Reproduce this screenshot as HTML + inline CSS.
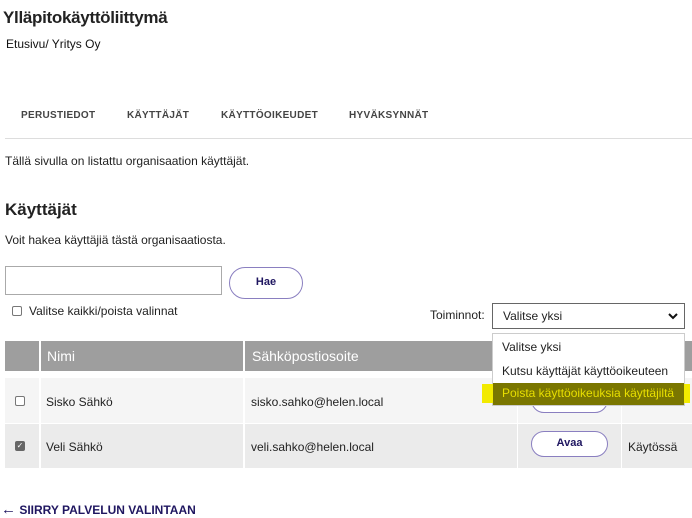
<!DOCTYPE html>
<html><head><meta charset="utf-8"><style>
*{box-sizing:border-box;margin:0;padding:0}
body{width:692px;height:510px;overflow:hidden;background:#fff;font-family:"Liberation Sans",Arial,sans-serif;color:#222;position:relative}
.a{position:absolute;white-space:nowrap}
h1{position:absolute;left:3px;top:8px;font-size:17px;font-weight:bold;color:#222;letter-spacing:-0.3px}
.tab{position:absolute;top:110px;font-size:10px;font-weight:bold;color:#444;letter-spacing:.3px}
</style></head><body>
<h1>Ylläpitokäyttöliittymä</h1>
<div class="a" style="left:6px;top:37px;font-size:12px;color:#111">Etusivu/ Yritys Oy</div>
<div class="tab" style="left:21px">PERUSTIEDOT</div>
<div class="tab" style="left:127px">KÄYTTÄJÄT</div>
<div class="tab" style="left:221px">KÄYTTÖOIKEUDET</div>
<div class="tab" style="left:349px">HYVÄKSYNNÄT</div>
<div class="a" style="left:5px;top:138px;width:687px;height:1px;background:#ddd"></div>
<div class="a" style="left:5px;top:154px;font-size:12px">Tällä sivulla on listattu organisaation käyttäjät.</div>
<div class="a" style="left:5px;top:200px;font-size:17px;font-weight:bold">Käyttäjät</div>
<div class="a" style="left:5px;top:233px;font-size:12px">Voit hakea käyttäjiä tästä organisaatiosta.</div>
<div class="a" style="left:5px;top:266px;width:217px;height:29px;border:1px solid #aaa"></div>
<div class="a" style="left:229px;top:267px;width:74px;height:32px;border:1.5px solid #8a7fc0;border-radius:16px;text-align:center;line-height:29px;font-size:11px;font-weight:bold;color:#1f1660">Hae</div>
<div class="a" style="left:12px;top:306px;width:10px;height:10px;border:1px solid #777;border-radius:2px"></div>
<div class="a" style="left:29px;top:304px;font-size:12px">Valitse kaikki/poista valinnat</div>
<div class="a" style="left:430px;top:308px;font-size:12px">Toiminnot:</div>
<div class="a" style="left:492px;top:303px;width:193px;height:26px;border:1px solid #666;font-size:12px;padding-left:10px;line-height:24px">Valitse yksi<svg style="position:absolute;right:6px;top:9px" width="10" height="7" viewBox="0 0 10 7"><path d="M1 1l4 4 4-4" stroke="#111" stroke-width="2" fill="none"/></svg></div>
<div class="a" style="left:5px;top:341px;width:687px;height:30px;background:#9e9e9e"></div>
<div class="a" style="left:39px;top:341px;width:2px;height:127px;background:#fff"></div>
<div class="a" style="left:243px;top:341px;width:2px;height:127px;background:#fff"></div>
<div class="a" style="left:47px;top:348px;font-size:14px;color:#fff">Nimi</div>
<div class="a" style="left:252px;top:348px;font-size:14px;color:#fff">Sähköpostiosoite</div>
<div class="a" style="left:5px;top:378px;width:687px;height:45px;background:#f5f5f5"></div>
<div class="a" style="left:5px;top:424px;width:687px;height:44px;background:#ebebeb"></div>
<div class="a" style="left:517px;top:378px;width:1px;height:90px;background:#fff"></div>
<div class="a" style="left:621px;top:378px;width:1px;height:90px;background:#fff"></div>
<div class="a" style="left:39px;top:378px;width:2px;height:90px;background:#fff"></div>
<div class="a" style="left:243px;top:378px;width:2px;height:90px;background:#fff"></div>
<div class="a" style="left:5px;top:423px;width:687px;height:1px;background:#fff"></div>
<div class="a" style="left:15px;top:396px;width:10px;height:10px;border:1px solid #777;border-radius:2px;background:#fff"></div>
<div class="a" style="left:15px;top:441px;width:10px;height:10px;border-radius:2px;background:#666;color:#fff;font-size:8px;line-height:10px;text-align:center">✓</div>
<div class="a" style="left:46px;top:395px;font-size:12px">Sisko Sähkö</div>
<div class="a" style="left:46px;top:440px;font-size:12px">Veli Sähkö</div>
<div class="a" style="left:251px;top:395px;font-size:12px">sisko.sahko@helen.local</div>
<div class="a" style="left:251px;top:440px;font-size:12px">veli.sahko@helen.local</div>
<div class="a" style="left:531px;top:387px;width:77px;height:26px;border:1.5px solid #8a7fc0;border-radius:13px;background:#fff"></div>
<div class="a" style="left:531px;top:431px;width:77px;height:26px;border:1.5px solid #8a7fc0;border-radius:13px;background:#fff;text-align:center;line-height:23px;font-size:11px;font-weight:bold;color:#1f1660">Avaa</div>
<div class="a" style="left:628px;top:440px;font-size:12px">Käytössä</div>
<div class="a" style="left:492px;top:333px;width:193px;height:73px;border:1px solid #ccc;background:#fff;font-size:12px">
<div style="position:absolute;left:9px;top:6px">Valitse yksi</div>
<div style="position:absolute;left:9px;top:30px">Kutsu käyttäjät käyttöoikeuteen</div>
</div>
<div class="a" style="left:482px;top:384px;width:208px;height:19px;background:#f2ea00"></div>
<div class="a" style="left:493px;top:383px;width:191px;height:22px;background:#7a7600;color:#e8df00;font-size:12px;padding-left:9px;line-height:21px">Poista käyttöoikeuksia käyttäjiltä</div>
<div class="a" style="left:1px;top:501px;font-size:12px;font-weight:bold;color:#1f1660"><span style="font-size:15px;font-weight:normal">←</span> SIIRRY PALVELUN VALINTAAN</div>
</body></html>
